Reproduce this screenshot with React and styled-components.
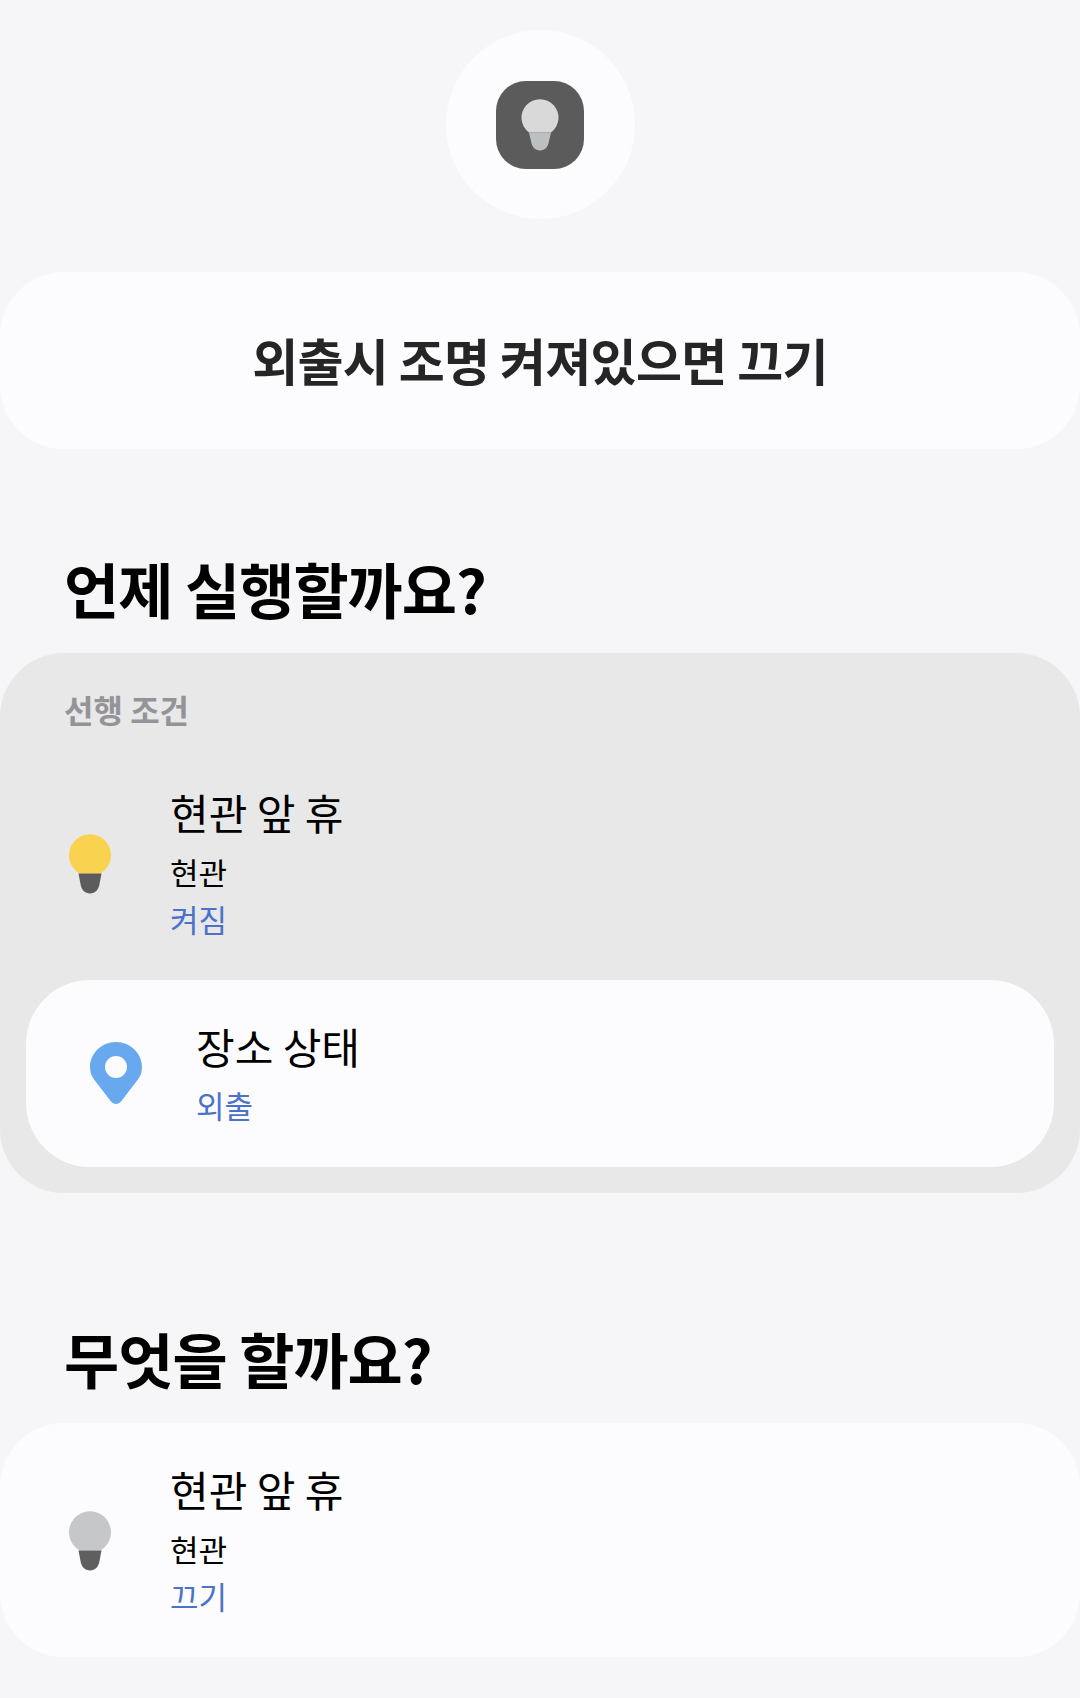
import React from "react";
import styled, { createGlobalStyle } from "styled-components";

const GlobalStyle = createGlobalStyle`
  html, body {
    margin: 0;
    padding: 0;
    background: #f6f6f8;
  }
  * {
    box-sizing: border-box;
  }
`;

const BulbIcon = ({ glass, base }) => (
  <svg width="44" height="60" viewBox="0 0 44 60">
    <path
      d="M11.5 39.5 A21 21 0 1 1 32.5 39.5 Z"
      fill={glass}
    />
    <path
      d="M10.5 39.5 H33.5 L31.5 50 C30.5 56 27 59.5 22 59.5 C17 59.5 13.5 56 12.5 50 Z"
      fill={base}
    />
  </svg>
);

const PinIcon = () => (
  <svg width="54" height="64" viewBox="0 0 54 64">
    <path
      fillRule="evenodd"
      d="M27 1 C12.4 1 1 12.6 1 26 C1 32 3 36.5 7 41 L22 60.5 C24.8 63.8 29.2 63.8 32 60.5 L47 41 C51 36.5 53 32 53 26 C53 12.6 41.6 1 27 1 Z M27 15 A11 11 0 1 1 27 37 A11 11 0 1 1 27 15 Z"
      fill="#68a8ef"
    />
  </svg>
);

const Row = ({ icon, title, sub, status }) => (
  <RowBox>
    <IconCell>{icon}</IconCell>
    <RowText>
      <RowTitle>{title}</RowTitle>
      <RowSub>{sub}</RowSub>
      <RowStatus>{status}</RowStatus>
    </RowText>
  </RowBox>
);

const App = () => {
  return (
    <Page>
      <GlobalStyle />
      <Hero>
        <AppTile>
          <svg width="40" height="52" viewBox="0 0 40 52">
            <path d="M9 33.5 A18.5 18.5 0 1 1 31 33.5 Z" fill="#d9d9d9" />
            <path
              d="M9 33.5 H31 L29 42 C28 48 25 51.5 20 51.5 C15 51.5 12 48 11 42 Z"
              fill="#bcc0c3"
            />
          </svg>
        </AppTile>
      </Hero>
      <NameCard>외출시 조명 켜져있으면 끄기</NameCard>
      <Heading $top={95}>언제 실행할까요?</Heading>
      <ConditionPanel>
        <PanelLabel>선행 조건</PanelLabel>
        <Row
          icon={<BulbIcon glass="#f9d34f" base="#5c5c5c" />}
          title="현관 앞 휴"
          sub="현관"
          status="켜짐"
        />
        <PlaceCard>
          <PinCell>
            <PinIcon />
          </PinCell>
          <PlaceText>
            <RowTitle>장소 상태</RowTitle>
            <RowStatus>외출</RowStatus>
          </PlaceText>
        </PlaceCard>
      </ConditionPanel>
      <Heading $top={121}>무엇을 할까요?</Heading>
      <ActionCard>
        <Row
          icon={<BulbIcon glass="#c6c7c9" base="#5f5f5f" />}
          title="현관 앞 휴"
          sub="현관"
          status="끄기"
        />
      </ActionCard>
    </Page>
  );
};

const Page = styled.div`
  width: 1080px;
  height: 1698px;
  padding-top: 30px;
  background: #f6f6f8;
  font-family: "Noto Sans CJK KR", "Noto Sans", sans-serif;
  color: #000000;
  overflow: hidden;
`;

const Hero = styled.div`
  width: 189px;
  height: 189px;
  margin: 0 auto;
  border-radius: 50%;
  background: #fcfcfe;
  display: flex;
  align-items: center;
  justify-content: center;
`;

const AppTile = styled.div`
  width: 88px;
  height: 88px;
  border-radius: 30px;
  background: #5b5b5b;
  display: flex;
  align-items: center;
  justify-content: center;
`;

const NameCard = styled.div`
  height: 177px;
  margin-top: 53px;
  padding-bottom: 4px;
  border-radius: 64px;
  background: #fcfcfe;
  display: flex;
  align-items: center;
  justify-content: center;
  font-size: 50px;
  font-weight: 700;
  letter-spacing: -0.7px;
  color: #252525;
`;

const Heading = styled.h2`
  margin: ${(props) => props.$top}px 0 0;
  padding-left: 64px;
  height: 109px;
  line-height: 88px;
  font-size: 60px;
  font-weight: 700;
  letter-spacing: -1px;
`;

const ConditionPanel = styled.div`
  height: 540px;
  border-radius: 64px;
  background: #e8e8e8;
`;

const PanelLabel = styled.div`
  height: 93px;
  padding: 32px 0 0 64px;
  font-size: 32px;
  line-height: 48px;
  font-weight: 700;
  color: #949498;
`;

const RowBox = styled.div`
  height: 234px;
  display: flex;
  align-items: center;
`;

const IconCell = styled.div`
  width: 170px;
  padding-left: 68px;
  padding-top: 2px;
  display: flex;
`;

const RowText = styled.div`
  display: flex;
  flex-direction: column;
  padding-bottom: 2px;
`;

const PlaceText = styled(RowText)`
  padding-bottom: 4px;
`;

const RowTitle = styled.div`
  font-size: 42px;
  line-height: 60px;
  margin-bottom: 6px;
`;

const RowSub = styled.div`
  font-size: 31px;
  line-height: 48px;
`;

const RowStatus = styled.div`
  font-size: 31px;
  line-height: 46px;
  color: #4b72c9;
`;

const PlaceCard = styled.div`
  height: 187px;
  margin: 0 26px;
  border-radius: 64px;
  background: #fcfcfe;
  display: flex;
  align-items: center;
`;

const PinCell = styled.div`
  width: 170px;
  padding-left: 63px;
  padding-bottom: 2px;
  display: flex;
`;

const ActionCard = styled.div`
  border-radius: 64px;
  background: #fcfcfe;
`;

export default App;
